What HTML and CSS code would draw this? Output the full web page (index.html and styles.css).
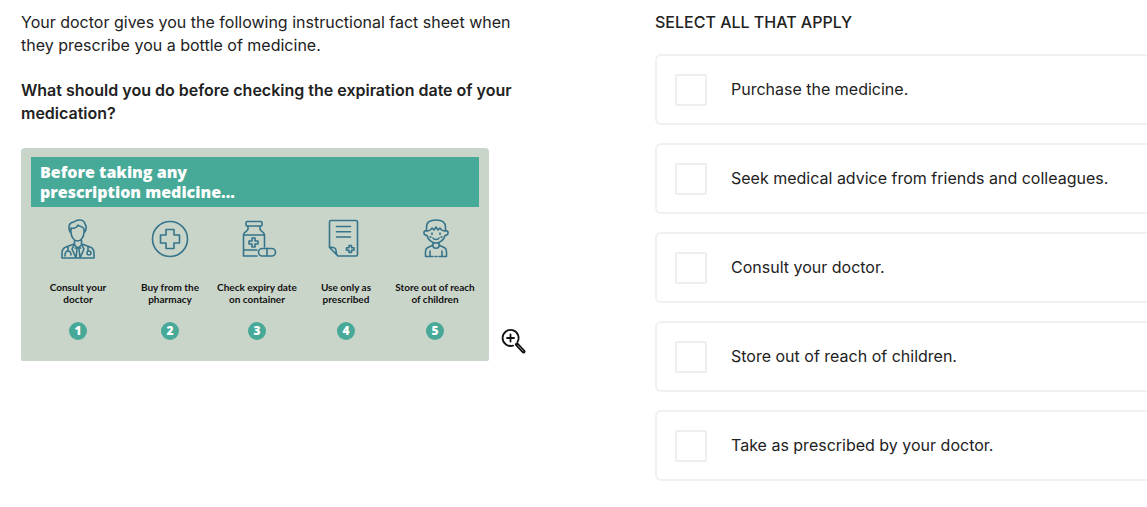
FILE: index.html
```html
<!DOCTYPE html>
<html lang="en">
<head>
  <meta charset="UTF-8" />
  <meta name="viewport" content="width=device-width, initial-scale=1.0"/>
  <title>Prescription Medicine</title>
  <link rel="stylesheet" href="styles.css">
</head>
<body>

  <main class="page">
    <section class="prompt">
      <p>Your doctor gives you the following instructional fact sheet when they prescribe you a bottle of medicine.</p>
      <p class="question">What should you do before checking the expiration date of your medication?</p>

      <div class="sheet-row">
        <div class="sheet">
          <h2 class="sheet-title">Before taking any<br>prescription medicine...</h2>

          <ol class="steps">
            <li class="step">
              <svg class="step-icon" viewBox="0 0 40 40" aria-hidden="true">
                <path d="M12 13C10 8 11 3 16 3C19 0 26 0 27 5C29 8 28 11 27 13M13 12V9C17 10 19 8 20 6C22 8 25 7 26 10V13C26 18 23 22 19.500 22C16 22 13 18 13 13M16.500 21V26L20 29L23.500 26V21M16 25L8 28C5 29 4 31 4 34V39H36V34C36 31 35 29 32 28L24 25M16 26L14 30L18 39M24 26L26 30L22 39M17 29H23M18 39L19 30M22 39L21 30M10 28V32M10 32C8 32 7 34 7 37M10 32C12 32 13 34 13 36M30 28V32"/>
                <circle cx="31" cy="34" r="2"/>
              </svg>
              <span class="step-text">Consult your<br>doctor</span>
              <span class="step-number">1</span>
            </li>
            <li class="step">
              <svg class="step-icon" viewBox="0 0 40 40" aria-hidden="true">
                <circle cx="20" cy="20" r="17.500"/>
                <path d="M16 10.500H24V16H29.500V24H24V29.500H16V24H10.500V16H16Z"/>
              </svg>
              <span class="step-text">Buy from the<br>pharmacy</span>
              <span class="step-number">2</span>
            </li>
            <li class="step">
              <svg class="step-icon" viewBox="0 0 40 40" aria-hidden="true">
                <path d="M10 2.500H24Q25 2.500 25 4V5.500Q25 7 24 7H10Q9 7 9 5.500V4Q9 2.500 10 2.500ZM11 7V10C11 12 6.500 13 6.500 16V37H20M23 7V10C23 12 27.500 13 27.500 16V28M6.500 16H27.500M6.500 31H20"/>
                <path d="M15 19H18V22H21V25H18V28H15V25H12V22H15Z"/>
                <rect x="21.500" y="29.500" width="17" height="7.500" rx="3.700"/>
                <path d="M30 29.500V37"/>
              </svg>
              <span class="step-text">Check expiry date<br>on container</span>
              <span class="step-number">3</span>
            </li>
            <li class="step">
              <svg class="step-icon" viewBox="0 0 40 40" aria-hidden="true">
                <path d="M3.500 28.500V3Q3.500 1.500 5 1.500H30Q31.500 1.500 31.500 3V35.500Q31.500 37 30 37H12L3.500 28.500C8 28 10 29 10 31.500C10 34 10.500 36 12 37M10.500 7.500H24.500M10.500 12.700H24.500M10.500 18H24.500"/>
                <path d="M23 26.500H25.500V28.800H28V31.200H25.500V33.500H23V31.200H20.500V28.800H23Z"/>
              </svg>
              <span class="step-text">Use only as<br>prescribed</span>
              <span class="step-number">4</span>
            </li>
            <li class="step">
              <svg class="step-icon" viewBox="0 0 40 40" aria-hidden="true">
                <path d="M11.500 12V8C11.500 3 15 1 21 1C27 1 30.500 3 30.500 8V12M11.500 12C14 12 16 11 17 9L19 11L21 8L23 11L25 9C26 11 28 12 30.500 12M11.500 12C8 11 8 16 12 16.500C13 21 17 24 21 24C25 24 29 21 30 16.500C34 16 34 11 30.500 12M18 19C19 21 23 21 24 19M18 24V27C18 30 24 30 24 27V24M18 26L14 28C11 29 10.500 31 10.500 33V37.500H18M24 26L28 28C31 29 31.500 31 31.500 33V37.500H24M15 32V37M27 32V37M20 37.500H22"/>
                <path d="M17 14V15.500M25 14V15.500M15 18H16M26 18H27"/>
              </svg>
              <span class="step-text">Store out of reach<br>of children</span>
              <span class="step-number">5</span>
            </li>
          </ol>
        </div>

        <button class="zoom-button" type="button" aria-label="Enlarge image">
          <svg viewBox="0 0 26 26" aria-hidden="true">
            <path class="lens" d="M12 17.600A8 8 0 1 1 16.500 14M9.500 6.500V13.500M6 10H13"/>
            <path class="handle" d="M16 16.500L22.500 23.500"/>
            <path class="handle-shine" d="M17 17.500L22 23"/>
          </svg>
        </button>
      </div>
    </section>

    <section class="answers">
      <h2 class="answers-title">SELECT ALL THAT APPLY</h2>
      <label class="answer"><input type="checkbox" name="answer" value="1" /><span>Purchase the medicine.</span></label>
      <label class="answer"><input type="checkbox" name="answer" value="2" /><span>Seek medical advice from friends and colleagues.</span></label>
      <label class="answer"><input type="checkbox" name="answer" value="3" /><span>Consult your doctor.</span></label>
      <label class="answer"><input type="checkbox" name="answer" value="4" /><span>Store out of reach of children.</span></label>
      <label class="answer"><input type="checkbox" name="answer" value="5" /><span>Take as prescribed by your doctor.</span></label>
    </section>
  </main>

</body>
</html>
```
FILE: styles.css
```css
* {
  box-sizing: border-box;
}

body {
  margin: 0;
  background-color: #fff;
  color: #222;
  font-family: Inter, sans-serif;
  font-size: 16px;
  line-height: 23px;
}

.page {
  display: grid;
  grid-template-columns: 634fr 492fr;
  padding: 11px 0 24px 21px;
}

.prompt {
  max-width: 506px;
}

.prompt p {
  margin: 0 0 22px;
}

.prompt .question {
  font-weight: 600;
  margin-bottom: 23px;
}

.sheet-row {
  display: flex;
  align-items: flex-end;
  gap: 12px;
}

.sheet {
  flex: 1;
  padding: 9px 10px 21px;
  background-color: #cad5ca;
  border-radius: 4px 4px 2px 2px;
  font-family: "Open Sans", sans-serif;
}

.sheet-title {
  margin: 0;
  padding: 5px 9px;
  background-color: #47a998;
  color: #fff;
  font-size: 16px;
  font-weight: 800;
  line-height: 20px;
}

.steps {
  display: grid;
  grid-template-columns: 94fr 90fr 84fr 94fr 84fr 2fr;
  margin: 0;
  padding: 12px 0 0;
  list-style: none;
}

.step {
  display: flex;
  flex-direction: column;
  align-items: center;
}

.step-icon {
  width: 40px;
  height: 40px;
  margin-bottom: 22px;
  fill: none;
  stroke: #35748a;
  stroke-width: 1.6;
  stroke-linecap: round;
  stroke-linejoin: round;
}

.step-text {
  margin-bottom: 17px;
  color: #111;
  font-family: Lato, sans-serif;
  font-size: 10px;
  font-weight: bold;
  line-height: 12px;
  text-align: center;
  white-space: nowrap;
}

.step-number {
  width: 18px;
  height: 18px;
  border-radius: 50%;
  background-color: #47a998;
  color: #fff;
  font-size: 12px;
  font-weight: 800;
  line-height: 18px;
  text-align: center;
}

.zoom-button {
  width: 26px;
  height: 26px;
  margin-bottom: 7px;
  padding: 0;
  border: none;
  background: none;
  cursor: pointer;
}

.zoom-button svg {
  display: block;
  fill: none;
  stroke: #111;
  stroke-linecap: round;
}

.lens {
  stroke-width: 1.8;
}

.handle {
  stroke-width: 4;
}

.handle-shine {
  stroke: #999;
  stroke-width: 1;
}

.answers {
  display: flex;
  flex-direction: column;
  gap: 18px;
}

.answers-title {
  margin: 0 0 2px;
  font-size: 16px;
  font-weight: 500;
}

.answer {
  display: flex;
  align-items: center;
  gap: 24px;
  min-height: 71px;
  padding: 0 18px;
  border: 2px solid #f0f0f0;
  border-right: none;
  border-radius: 6px 0 0 6px;
  cursor: pointer;
}

.answer input {
  appearance: none;
  flex: none;
  width: 32px;
  height: 32px;
  margin: 0;
  border: 2px solid #eee;
  border-radius: 2px;
  background-color: #fff;
}

.answer input:checked {
  background-color: #47a998;
}
```
